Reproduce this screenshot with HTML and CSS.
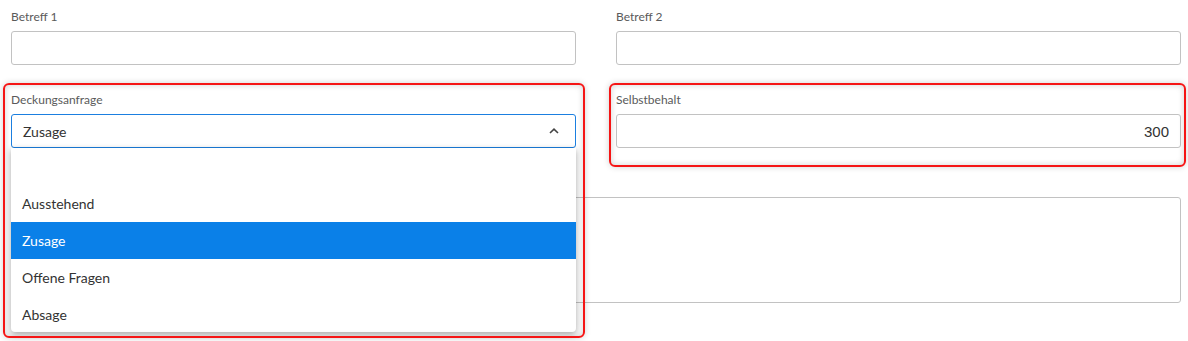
FILE: index.html
```html
<!DOCTYPE html>
<html lang="de">
  <head>
    <meta charset="UTF-8" />
    <meta name="viewport" content="width=device-width, initial-scale=1.0" />
    <title>Deckungsanfrage</title>
    <link rel="stylesheet" href="styles.css">
  </head>
  <body>
    <form class="form-grid">
      <div class="field">
        <label>Betreff 1</label>
        <input type="text" class="input" />
      </div>

      <div class="field">
        <label>Betreff 2</label>
        <input type="text" class="input" />
      </div>

      <!-- Deckungsanfrage, dropdown open -->
      <div class="field marked mark-left">
        <label>Deckungsanfrage</label>
        <div class="select open">
          <span>Zusage</span>
          <svg class="chevron" width="10" height="6" viewBox="0 0 10 6">
            <path d="M1 5 L5 1.2 L9 5" fill="none" stroke="#444" stroke-width="1.6" />
          </svg>
        </div>
        <ul class="options">
          <li class="empty"></li>
          <li>Ausstehend</li>
          <li class="active">Zusage</li>
          <li>Offene Fragen</li>
          <li>Absage</li>
        </ul>
        <div class="highlight"></div>
      </div>

      <div class="field marked mark-right">
        <label>Selbstbehalt</label>
        <input type="text" class="input number" value="300" />
        <div class="highlight"></div>
      </div>

      <div class="field wide">
        <label>Bemerkung</label>
        <textarea class="input textarea"></textarea>
      </div>
    </form>
  </body>
</html>
```

FILE: styles.css
```css
html,
body {
  height: 100%;
}

body {
  margin: 0;
  box-sizing: border-box;
  padding: 10px 7px 0 11px;
  font-family: Lato, "Open Sans", sans-serif;
  color: #333;
  background: #fff;
}

.form-grid {
  display: grid;
  grid-template-columns: 565px 565px;
  column-gap: 40px;
  row-gap: 28px;
}

.field {
  display: flex;
  flex-direction: column;
  position: relative;
}

.field.wide {
  grid-column: 1 / span 2;
}

.field label {
  font-size: 12px;
  line-height: 14px;
  color: #5a5a5a;
  margin-bottom: 7px;
}

.input {
  box-sizing: border-box;
  height: 34px;
  width: 100%;
  border: 1px solid #c2c2c2;
  border-radius: 3px;
  background: #fff;
  font-family: Lato, sans-serif;
  font-size: 14px;
  padding: 0 11px;
  margin: 0;
  outline: none;
}

.input.number {
  text-align: right;
  font-family: "Liberation Sans", Arial, sans-serif;
  font-size: 15px;
  color: #333;
}

.textarea {
  height: 106px;
  resize: none;
}

/* select with open list */
.select {
  box-sizing: border-box;
  height: 34px;
  border: 1px solid #1b7fe0;
  border-radius: 3px;
  display: flex;
  align-items: center;
  justify-content: space-between;
  padding: 0 16px 0 11px;
  font-size: 14px;
  color: #333;
  background: #fff;
}

.chevron {
  margin-top: -1px;
}

.options {
  position: absolute;
  top: 55px;
  left: 0;
  right: 0;
  margin: 0;
  padding: 0;
  list-style: none;
  background: #fff;
  border-radius: 0 0 4px 4px;
  box-shadow: 0 2px 6px rgba(0, 0, 0, 0.35);
  z-index: 2;
}

.options li {
  height: 37px;
  line-height: 37px;
  padding-left: 11px;
  font-size: 14px;
  color: #333;
}

.options li:last-child {
  height: 36px;
}

.options li.active {
  background: #0a80e8;
  color: #fff;
}

/* red highlight frames */
.highlight {
  position: absolute;
  top: -10px;
  border: 2px solid #f51515;
  border-radius: 6px;
  box-shadow: 0 0 6px rgba(0, 0, 0, 0.18), inset 0 0 6px rgba(0, 0, 0, 0.18);
  pointer-events: none;
  z-index: 3;
}

.mark-left .highlight {
  left: -8px;
  right: -9px;
  height: 251px;
}

.mark-right .highlight {
  left: -7px;
  right: -5px;
  bottom: -19px;
}
```
